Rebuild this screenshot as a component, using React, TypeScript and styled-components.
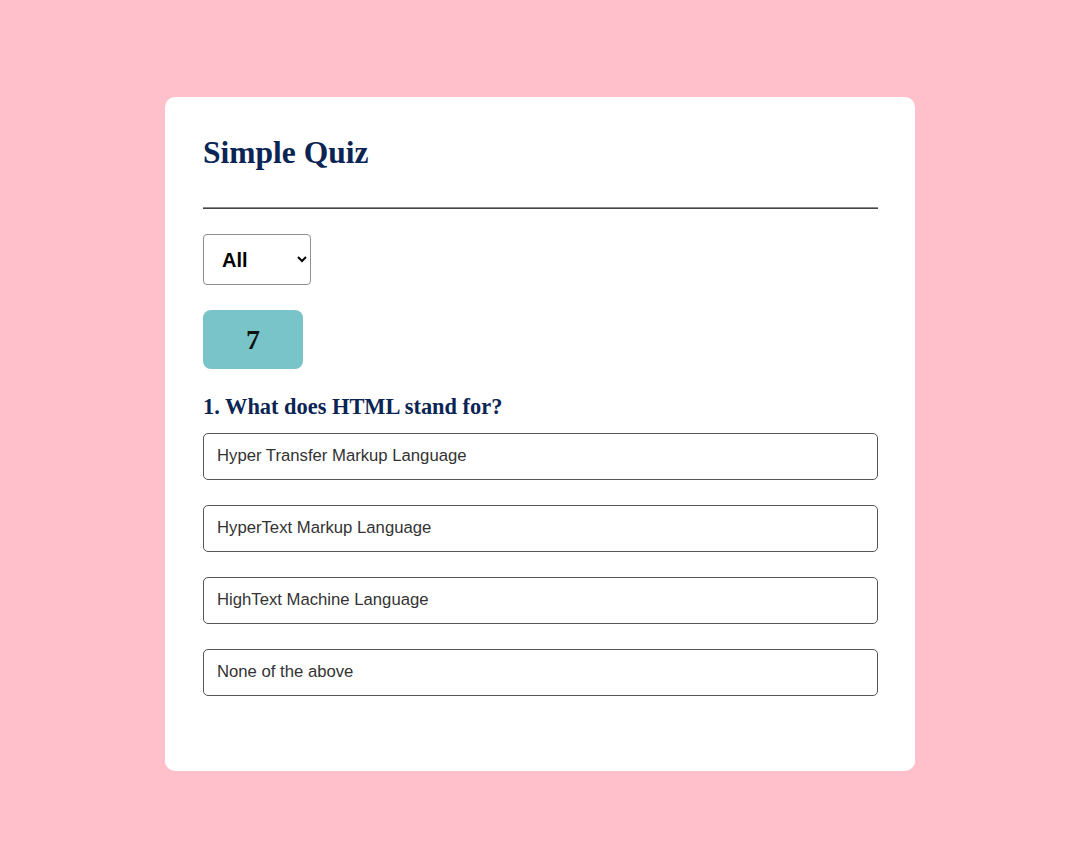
import React from "react";
import styled, { createGlobalStyle } from "styled-components";

const Global = createGlobalStyle`
  html, body { margin: 0; padding: 0; }
  body { background: #ffc0cb; font-family: "Liberation Serif", "Times New Roman", serif; }
`;

const Page = styled.div`
  display: flex;
  justify-content: center;
  padding: 97px 0 87px 0;
  margin-left: -6px;
`;

const Card = styled.div`
  width: 750px;
  box-sizing: border-box;
  background: #fff;
  border-radius: 10px;
  padding: 28px 37px 75px 38px;
  display: flex;
  flex-direction: column;
`;

const Title = styled.h1`
  margin: 8px 0 0;
  font-size: 31.5px;
  line-height: 40px;
  font-weight: bold;
  color: #0a2454;
  font-family: "Liberation Serif", "Times New Roman", serif;
`;

const Rule = styled.div`
  margin-top: 34px;
  height: 2px;
  background: linear-gradient(#8a8a8a 0 50%, #444 50% 100%);
`;

const Select = styled.select`
  margin-top: 25px;
  width: 108px;
  height: 51px;
  box-sizing: border-box;
  padding: 0 8px 0 14px;
  font-family: "Liberation Sans", Arial, sans-serif;
  font-size: 20px;
  font-weight: bold;
  color: #000;
  background: #fff;
  border: 1px solid #8f8f8f;
  border-radius: 4px;
`;

const Badge = styled.div`
  margin-top: 25px;
  width: 100px;
  height: 59px;
  border-radius: 8px;
  background: #78c4c9;
  display: flex;
  align-items: center;
  justify-content: center;
  font-family: "Liberation Serif", "Times New Roman", serif;
  font-weight: bold;
  font-size: 28px;
  color: #111;
`;

const Question = styled.h3`
  margin: 26px 0 0;
  font-size: 22.4px;
  line-height: 24px;
  font-weight: bold;
  color: #0a2454;
  font-family: "Liberation Serif", "Times New Roman", serif;
`;

const Options = styled.div`
  margin-top: 14px;
  display: flex;
  flex-direction: column;
  gap: 25px;
`;

const Option = styled.div`
  height: 47px;
  box-sizing: border-box;
  border: 1px solid #555;
  border-radius: 5px;
  padding: 0 13px 1px;
  display: flex;
  align-items: center;
  font-family: "Liberation Sans", Arial, sans-serif;
  font-size: 16.7px;
  color: #333;
`;

const answers = [
  "Hyper Transfer Markup Language",
  "HyperText Markup Language",
  "HighText Machine Language",
  "None of the above",
];

export default function App() {
  return (
    <>
      <Global />
      <Page>
        <Card>
          <Title>Simple Quiz</Title>
          <Rule />
          <Select defaultValue="All">
            <option>All</option>
          </Select>
          <Badge>7</Badge>
          <Question>1. What does HTML stand for?</Question>
          <Options>
            {answers.map((a) => (
              <Option key={a}>{a}</Option>
            ))}
          </Options>
        </Card>
      </Page>
    </>
  );
}
